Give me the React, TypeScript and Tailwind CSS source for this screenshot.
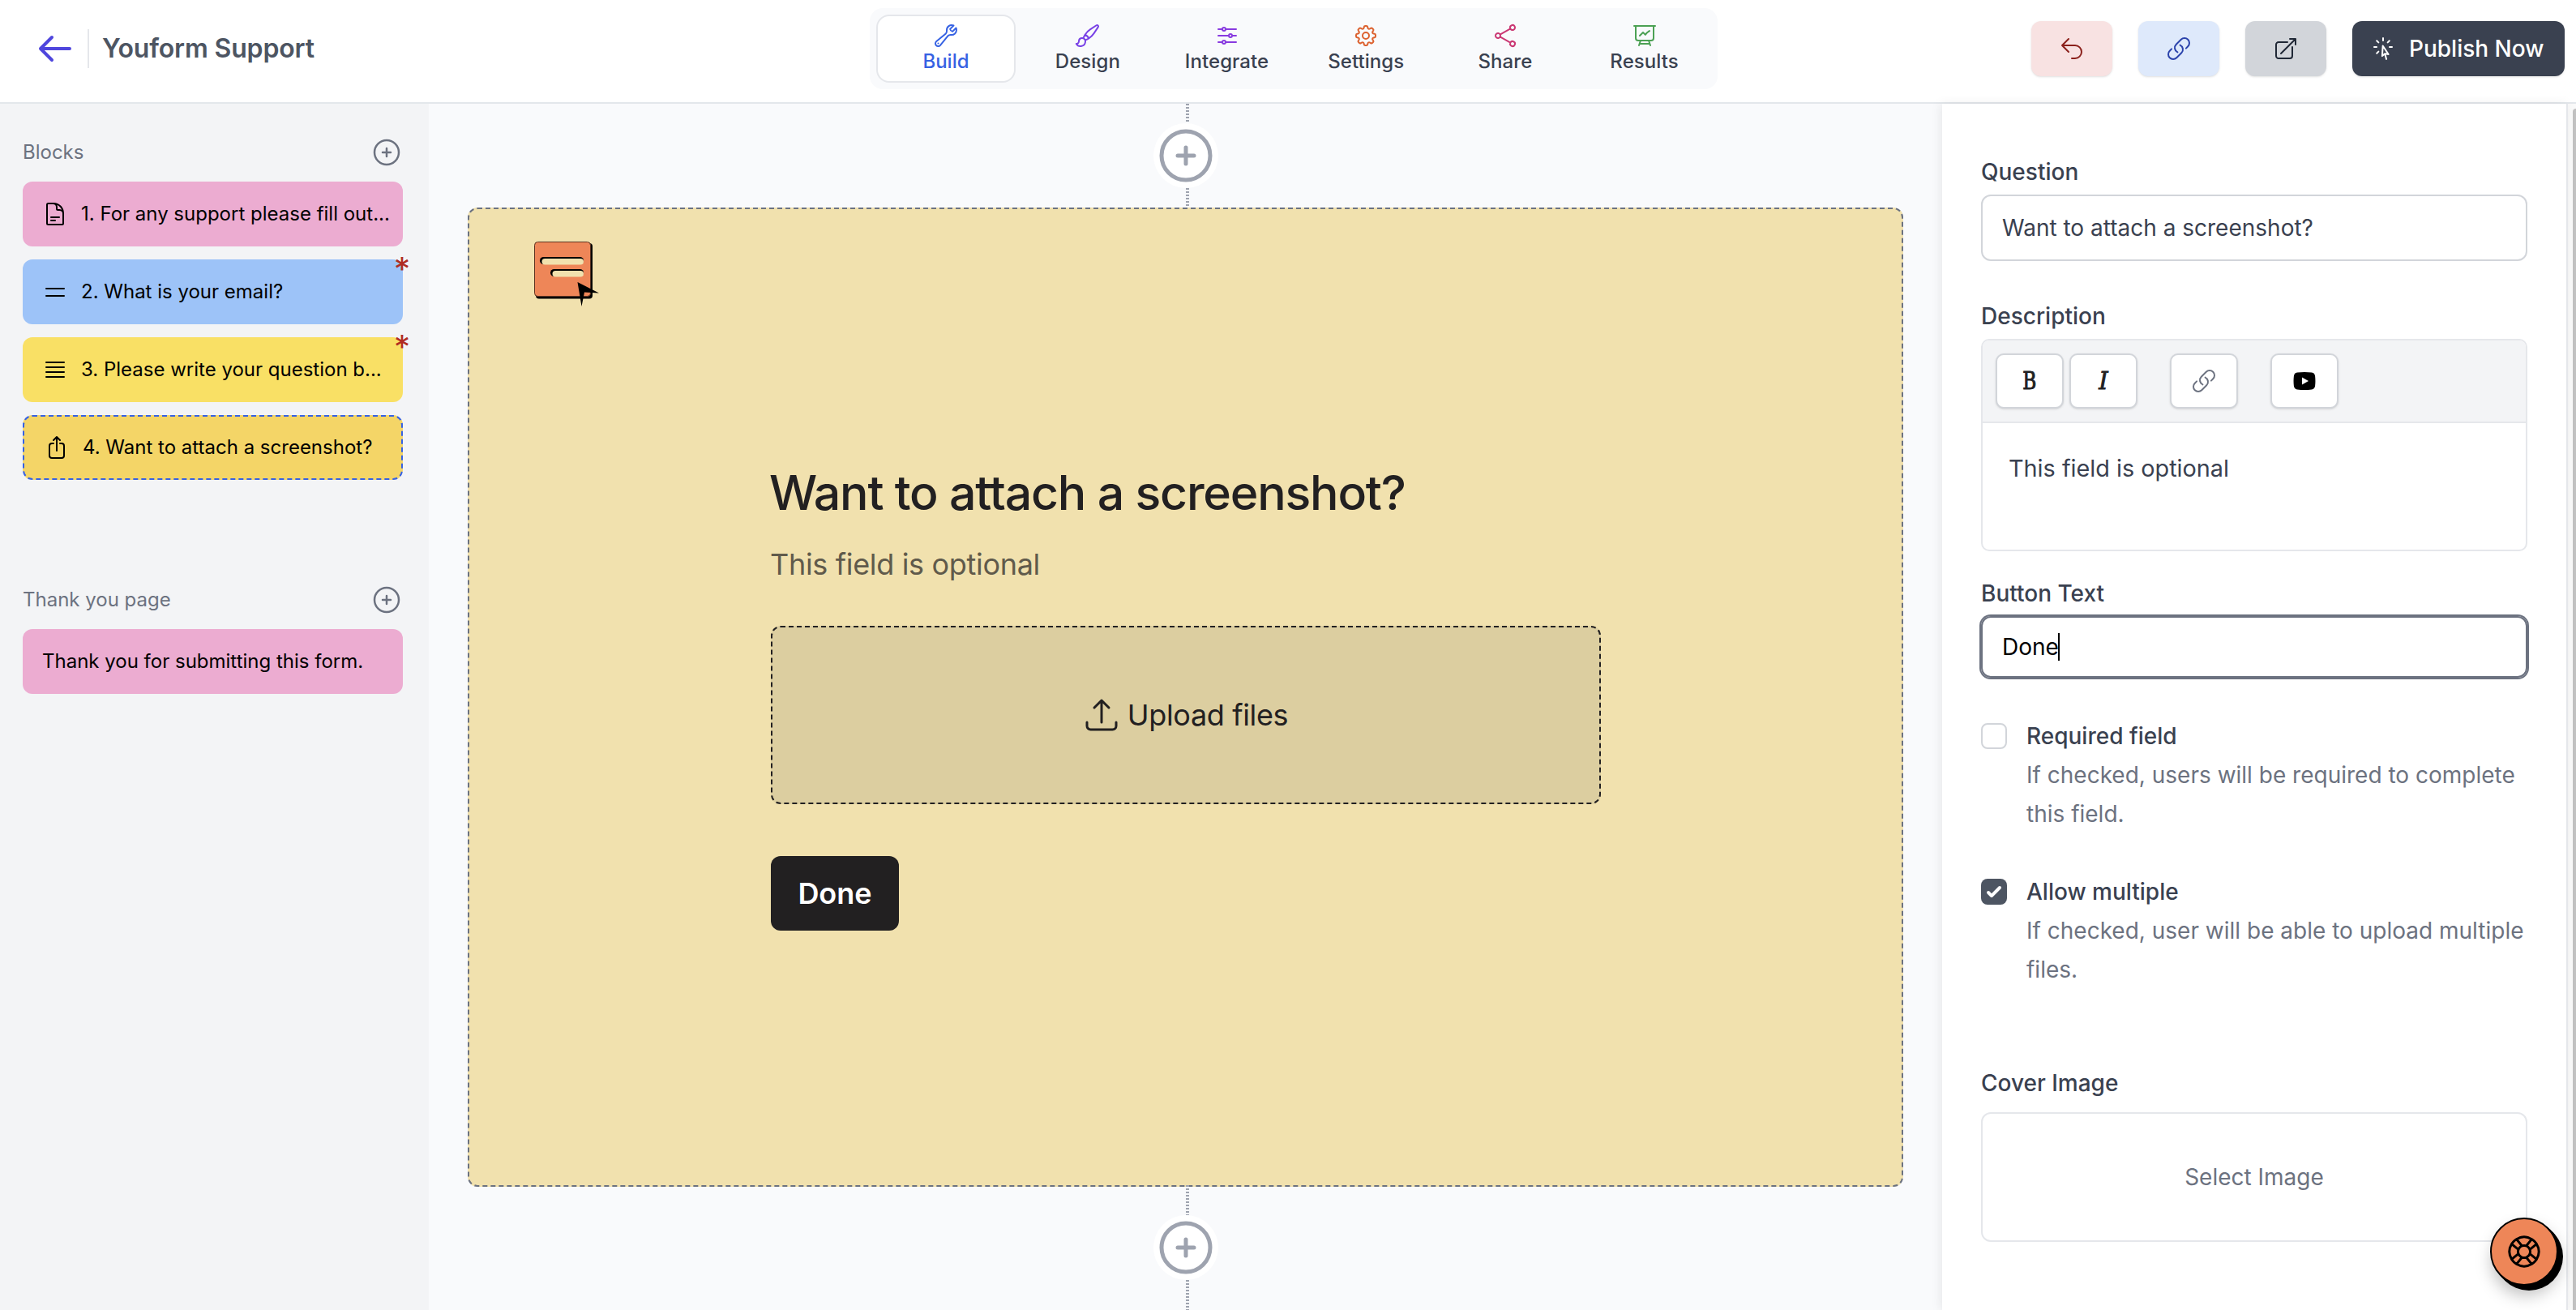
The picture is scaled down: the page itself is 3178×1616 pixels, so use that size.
import { type ComponentType, type ReactNode } from 'react'
import { HiOutlineArrowLeft } from 'react-icons/hi'
import {
  HiOutlineAdjustmentsHorizontal,
  HiOutlineArrowTopRightOnSquare,
  HiOutlineArrowUpOnSquare,
  HiOutlineArrowUpTray,
  HiOutlineArrowUturnLeft,
  HiOutlineBars2,
  HiOutlineBars4,
  HiOutlineCog8Tooth,
  HiOutlineCursorArrowRays,
  HiOutlineDocumentText,
  HiOutlineLifebuoy,
  HiOutlineLink,
  HiOutlinePaintBrush,
  HiOutlinePlusCircle,
  HiOutlinePresentationChartLine,
  HiOutlineShare,
  HiOutlineWrench,
} from 'react-icons/hi2'

type Icon = ComponentType<{ className?: string }>

const tabs: Array<{ label: string; icon: Icon; color: string }> = [
  { label: 'Design', icon: HiOutlinePaintBrush, color: 'text-[#7942e6]' },
  { label: 'Integrate', icon: HiOutlineAdjustmentsHorizontal, color: 'text-[#883ae0]' },
  { label: 'Settings', icon: HiOutlineCog8Tooth, color: 'text-[#dc6230]' },
  { label: 'Share', icon: HiOutlineShare, color: 'text-[#cb3974]' },
  { label: 'Results', icon: HiOutlinePresentationChartLine, color: 'text-[#4ca154]' },
]

const blocks: Array<{ text: string; icon: Icon; style: string; required?: boolean }> = [
  { text: '1. For any support please fill out...', icon: HiOutlineDocumentText, style: 'bg-[#ecacd1]' },
  { text: '2. What is your email?', icon: HiOutlineBars2, style: 'bg-[#9dc3f8]', required: true },
  { text: '3. Please write your question b...', icon: HiOutlineBars4, style: 'bg-[#f9e065]', required: true },
  { text: '4. Want to attach a screenshot?', icon: HiOutlineArrowUpOnSquare, style: 'bg-[#f4d567] border-2 border-dashed border-[#3662e3]' },
]

function Header() {
  return (
    <header className="relative flex h-32 shrink-0 items-center justify-between border-b-2 border-[#e3e7eb] bg-white pb-1.5">
      <div className="flex items-center pl-11">
        <HiOutlineArrowLeft className="size-12 text-[#4f46dd]" />
        <div className="ml-4 h-12 w-0.5 bg-[#e5e7eb]" />
        <h1 className="ml-4 text-[32px] leading-12 font-semibold tracking-[-0.005em] text-[#4d5562]">Youform Support</h1>
      </div>
      <nav className="absolute top-2.5 left-[1073px] flex h-[100px] w-[1046px] items-center rounded-2xl bg-[#f9fafc] pl-2">
        <button className="mr-[3px] flex h-[84px] w-[172px] flex-col items-center rounded-2xl border-2 border-[#e5e7eb] bg-white pt-2 text-2xl font-medium text-[#3662e3]">
          <HiOutlineWrench className="size-8" />
          <span className="leading-8">Build</span>
        </button>
        {tabs.map(({ label, icon: TabIcon, color }) => (
          <button key={label} className="flex h-[84px] w-[171.7px] flex-col items-center pt-2.5 text-2xl font-medium text-[#3a4150]">
            <TabIcon className={`size-8 ${color}`} />
            <span className="leading-8 tracking-[0.003em]">{label}</span>
          </button>
        ))}
      </nav>
      <div className="flex items-center gap-8 pr-3.5">
        <button className="flex h-[68px] w-[100px] items-center justify-center rounded-xl bg-[#f8e2e2] text-[#8b211c] shadow-sm">
          <HiOutlineArrowUturnLeft className="size-8" />
        </button>
        <button className="flex h-[68px] w-[100px] items-center justify-center rounded-xl bg-[#dee9fb] text-[#2a42ab] shadow-sm">
          <HiOutlineLink className="size-8" />
        </button>
        <button className="flex h-[68px] w-[100px] items-center justify-center rounded-xl bg-[#d2d5da] text-[#202836] shadow-sm">
          <HiOutlineArrowTopRightOnSquare className="size-8" />
        </button>
        <button className="flex h-[68px] w-[262px] items-center rounded-xl bg-[#3a4150] pl-[22px] text-[28px] font-medium text-white shadow-sm">
          <HiOutlineCursorArrowRays className="mr-4 size-8" />
          Publish Now
        </button>
      </div>
    </header>
  )
}

function SectionTitle({ children }: { children: ReactNode }) {
  return (
    <div className="flex h-10 items-center justify-between text-2xl text-[#6c7280]">
      <span>{children}</span>
      <HiOutlinePlusCircle className="size-10" />
    </div>
  )
}

function Sidebar() {
  return (
    <aside className="w-[529px] shrink-0 bg-[#f3f4f6] pt-10 pr-8 pl-7">
      <SectionTitle>Blocks</SectionTitle>
      <ul className="mt-4 space-y-4">
        {blocks.map(({ text, icon: BlockIcon, style, required }) => (
          <li key={text} className={`relative flex h-20 items-center rounded-xl pl-6 text-2xl whitespace-nowrap text-black ${style}`}>
            <BlockIcon className="mr-4 size-8 shrink-0" />
            {text}
            {required && <span className="absolute -top-1 -right-[9px] text-[40px] leading-8 text-[#b02c22]">*</span>}
          </li>
        ))}
      </ul>
      <div className="mt-32">
        <SectionTitle>Thank you page</SectionTitle>
        <div className="mt-4 flex h-20 items-center rounded-xl bg-[#ecacd1] pl-6 text-2xl text-black">Thank you for submitting this form.</div>
      </div>
    </aside>
  )
}

function Dots() {
  return <div className="ml-1 w-1 flex-1 bg-[repeating-linear-gradient(to_bottom,#9ea3af_0_2px,transparent_2px_4px)]" />
}

function AddBlock() {
  return (
    <div className="rounded-full bg-white">
      <HiOutlinePlusCircle className="size-20 text-[#9ea3af]" />
    </div>
  )
}

function FormLogo() {
  return (
    <svg viewBox="0 0 82 82" className="size-[82px]">
      <rect x="2" y="2" width="70" height="68.5" rx="4" fill="#000" />
      <rect x="0.5" y="0.5" width="69" height="67" rx="4" fill="#ee8658" stroke="#5d3423" />
      <rect x="7" y="19" width="54" height="9" rx="4.5" fill="#000" />
      <rect x="9.5" y="21" width="51.5" height="7.5" rx="3.75" fill="#f1e1ae" />
      <rect x="20" y="34" width="41" height="9" rx="4.5" fill="#000" />
      <rect x="22.5" y="36" width="38.5" height="7.5" rx="3.75" fill="#f1e1ae" />
      <path d="M53.500 50 80 63.500 62 62.500 58.500 80Z" fill="#000" />
    </svg>
  )
}

function Canvas() {
  return (
    <main className="flex flex-1 flex-col bg-[#f9fafc] px-12">
      <div className="flex h-32 flex-col items-center">
        <Dots />
        <AddBlock />
        <Dots />
      </div>
      <section className="h-[1208px] rounded-xl border-2 border-dashed border-[#6c7280] bg-[#f1e1ae] pt-10 pl-20">
        <FormLogo />
        <div className="mt-[188px] ml-[292px] w-[1024px] text-[#222021]">
          <h2 className="-ml-0.5 text-[59px] leading-[80px] font-medium tracking-[-0.0205em] whitespace-nowrap">Want to attach a screenshot?</h2>
          <p className="mt-[21px] -ml-px text-4xl leading-[54px] tracking-[-0.009em] text-[#605a4b]">This field is optional</p>
          <div className="mt-[49px] flex h-[220px] items-center justify-center gap-2 rounded-xl border-2 border-dashed border-[#222021] bg-[#dccea0] pr-0.5 text-4xl tracking-[-0.01em]">
            <HiOutlineArrowUpTray className="size-12" />
            Upload files
          </div>
          <button className="mt-16 h-[92px] w-[158px] rounded-xl bg-[#222021] text-4xl font-semibold text-white">Done</button>
        </div>
      </section>
      <div className="-mt-0.5 flex flex-1 flex-col items-center">
        <Dots />
        <AddBlock />
        <Dots />
      </div>
    </main>
  )
}

function ToolButton({ className = '', children }: { className?: string; children: ReactNode }) {
  return (
    <button className={`flex h-[68px] w-[84px] items-center justify-center rounded-[10px] border-2 border-[#d2d5da] bg-white text-[#222021] shadow-sm ${className}`}>
      {children}
    </button>
  )
}

function CheckRow({ title, text, checked }: { title: string; text: string; checked?: boolean }) {
  return (
    <div className="flex gap-6 text-[28px] leading-12">
      {checked ? (
        <div className="mt-2 size-8 shrink-0 rounded-lg bg-[#4d5562]">
          <svg viewBox="0 0 16 16" className="size-8" fill="#fff">
            <path d="M12.207 4.793a1 1 0 0 1 0 1.414l-5 5a1 1 0 0 1-1.414 0l-2-2a1 1 0 0 1 1.414-1.414L6.500 9.086l4.293-4.293a1 1 0 0 1 1.414 0z" />
          </svg>
        </div>
      ) : (
        <div className="mt-2 size-8 shrink-0 rounded-lg border-2 border-[#d2d5da] bg-white" />
      )}
      <div className="w-[618px]">
        <div className="font-medium text-[#3a4150]">{title}</div>
        <p className="text-[#6c7280]">{text}</p>
      </div>
    </div>
  )
}

function Inspector() {
  return (
    <aside className="relative w-[772px] shrink-0 border-r-2 border-[#e5e7eb] bg-white px-12 pt-16 text-[28px] text-[#3a4150] shadow-[-2px_0_12px_rgba(0,0,0,0.08)]">
      <label className="block leading-10 font-medium">Question</label>
      <div className="mt-2 flex h-[82px] items-center rounded-xl border-2 border-[#d2d5da] pl-6">Want to attach a screenshot?</div>

      <label className="mt-12 block leading-10 font-medium">Description</label>
      <div className="mt-2 h-[262px] overflow-hidden rounded-[10px] border-2 border-[#e5e7eb]">
        <div className="flex h-[102px] items-center border-b-2 border-[#e5e7eb] bg-[#f3f4f6] pl-4">
          <ToolButton>
            <span className="scale-x-80 font-['DejaVu_Serif',serif] text-[29px] leading-8 [-webkit-text-stroke:1px_#222021]">B</span>
          </ToolButton>
          <ToolButton className="ml-[7px]">
            <span className="font-['DejaVu_Serif',serif] text-[29px] leading-8 italic [-webkit-text-stroke:0.8px_#222021]">I</span>
          </ToolButton>
          <ToolButton className="ml-10">
            <HiOutlineLink className="size-8 text-[#6c7280]" />
          </ToolButton>
          <ToolButton className="ml-10">
            <svg viewBox="0 0 28 22" className="h-[22px] w-7">
              <path d="M5 .6Q14-.6 23 .6q3.600.4 4.100 4.400.7 6 0 12-.5 4-4.100 4.400-9 1.200-18 0-3.600-.4-4.100-4.400-.7-6 0-12Q1.400 1 5 .6z" fill="#000" />
              <path d="M11 6.500v9l8-4.500z" fill="#fff" />
            </svg>
          </ToolButton>
        </div>
        <p className="mt-9 ml-8 text-[28.8px] leading-10">This field is optional</p>
      </div>

      <label className="mt-8 block leading-10 font-medium">Button Text</label>
      <div className="mt-2 flex h-[76px] items-center rounded-xl border-2 border-[#6c7280] pl-6 text-black ring-2 ring-[#6c7280]">
        Done
        <span className="-ml-px h-[34px] w-0.5 bg-black" />
      </div>

      <div className="mt-12">
        <CheckRow title="Required field" text="If checked, users will be required to complete this field." />
      </div>
      <div className="mt-12">
        <CheckRow checked title="Allow multiple" text="If checked, user will be able to upload multiple files." />
      </div>

      <label className="mt-24 block leading-10 font-medium">Cover Image</label>
      <div className="mt-4 flex h-40 items-center justify-center rounded-xl border-2 border-[#e5e7eb] text-[#6c7280]">Select Image</div>
    </aside>
  )
}

export default function App() {
  return (
    <div className="relative flex h-[1616px] w-[3178px] flex-col overflow-hidden bg-white font-['Inter',sans-serif]">
      <Header />
      <div className="flex min-h-0 flex-1">
        <Sidebar />
        <Canvas />
        <Inspector />
        {/* page scrollbar, cut off by the window edge */}
        <div className="w-2.5 shrink-0 bg-[#fafafa] pt-1.5 pl-1.5">
          <div className="h-full rounded-tl-full bg-[#c1c1c1]" />
        </div>
      </div>
      <button className="absolute top-[1502px] left-[3072px] flex size-[84px] items-center justify-center rounded-full border-2 border-black bg-[#ee8658] text-black shadow-[2px_2px_0_#000,4px_4px_0_#000,6px_6px_0_#000,2px_12px_20px_rgba(0,0,0,0.25)]">
        <HiOutlineLifebuoy className="size-12" />
      </button>
    </div>
  )
}
